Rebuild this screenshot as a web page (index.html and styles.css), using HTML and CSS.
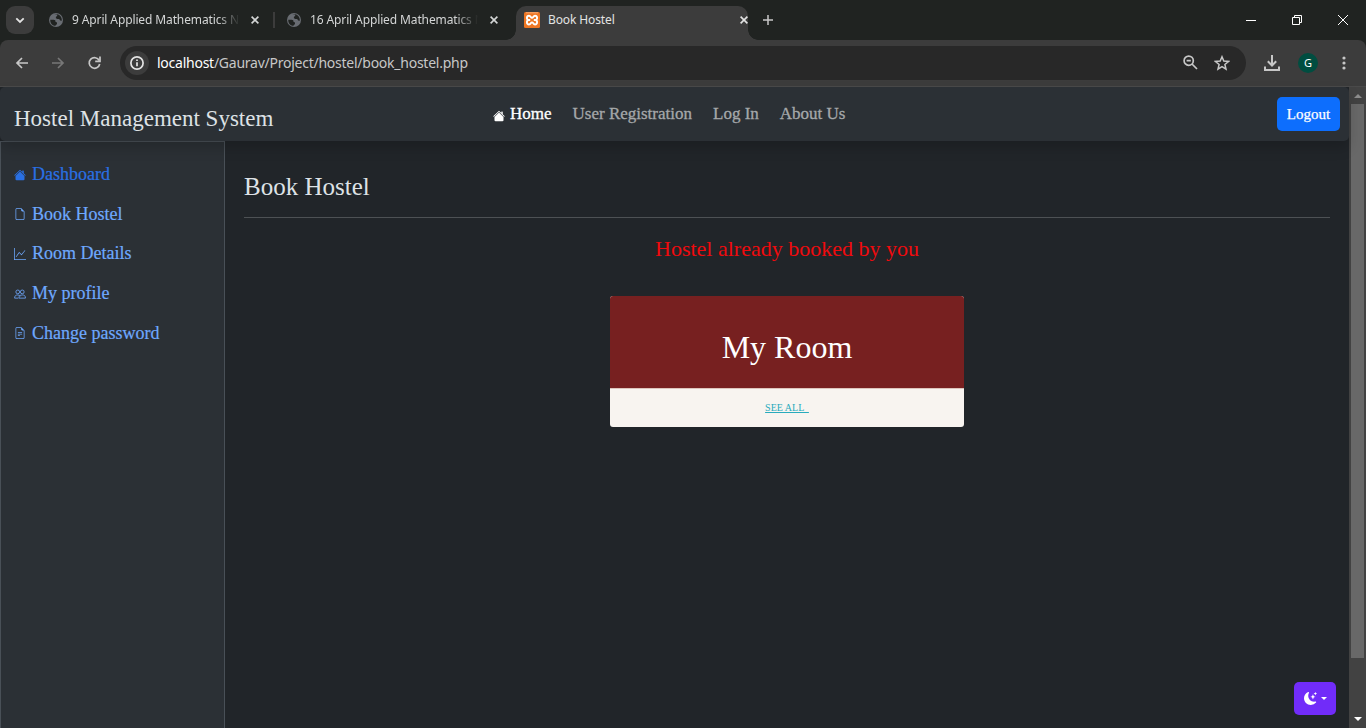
FILE: index.html
```html
<!DOCTYPE html>
<html lang="en">
<head>
<meta charset="utf-8">
<title>Book Hostel</title>
<link rel="stylesheet" href="styles.css">
</head>
<body>
<svg class="defs" width="0" height="0">
  <symbol id="house" viewBox="0 0 16 16"><path d="m8 3.293 6 6V13.5a1.5 1.5 0 0 1-1.5 1.5h-9A1.5 1.5 0 0 1 2 13.5V9.293l6-6zm5-.793V6l-2-2V2.5a.5.5 0 0 1 .5-.5h1a.5.5 0 0 1 .5.5z"/><path d="M7.293 1.5a1 1 0 0 1 1.414 0l6.647 6.646a.5.5 0 0 1-.708.708L8 2.207 1.354 8.854a.5.5 0 1 1-.708-.708L7.293 1.5z"/></symbol>
  <symbol id="file" viewBox="0 0 16 16"><path d="M14 4.5V14a2 2 0 0 1-2 2H4a2 2 0 0 1-2-2V2a2 2 0 0 1 2-2h5.5L14 4.5zm-3 0A1.5 1.5 0 0 1 9.500 3V1H4a1 1 0 0 0-1 1v12a1 1 0 0 0 1 1h8a1 1 0 0 0 1-1V4.500h-2z"/></symbol>
  <symbol id="graph" viewBox="0 0 16 16"><path fill-rule="evenodd" d="M0 0h1v15h15v1H0V0Zm14.817 3.113a.5.5 0 0 1 .07.704l-4.500 5.500a.5.5 0 0 1-.74.037L7.060 6.767l-3.656 5.027a.5.5 0 0 1-.808-.588l4-5.500a.5.5 0 0 1 .758-.06l2.609 2.610 4.150-5.073a.5.5 0 0 1 .704-.07Z"/></symbol>
  <symbol id="people" viewBox="0 0 16 16"><g fill="none" stroke="currentColor" stroke-width="1.100"><circle cx="5" cy="5.200" r="2.500"/><circle cx="11" cy="5.200" r="2.500"/><path d="M.8 13.500c0-3 1.500-4.200 4.200-4.200 1.800 0 3 .6 3.600 1.800M.8 13.500h5M6.600 13.500c0-3 1.500-4.200 4.400-4.200s4.300 1.200 4.300 4.200z"/></g></symbol>
  <symbol id="filetext" viewBox="0 0 16 16"><path d="M5.500 7a.5.5 0 0 0 0 1h5a.5.5 0 0 0 0-1h-5zM5 9.500a.5.5 0 0 1 .5-.5h5a.5.5 0 0 1 0 1h-5a.5.5 0 0 1-.5-.5zm0 2a.5.5 0 0 1 .5-.5h2a.5.5 0 0 1 0 1h-2a.5.5 0 0 1-.5-.5z"/><path d="M9.500 0H4a2 2 0 0 0-2 2v12a2 2 0 0 0 2 2h8a2 2 0 0 0 2-2V4.500L9.500 0zm0 1v2A1.500 1.500 0 0 0 11 4.500h2V14a1 1 0 0 1-1 1H4a1 1 0 0 1-1-1V2a1 1 0 0 1 1-1h5.500z"/></symbol>
  <symbol id="globe" viewBox="0 0 14 14"><circle cx="7" cy="7" r="7" fill="#686c72"/><path d="M1.300 6.700h3.200c1.600 0 2.300.9 1.900 2.100l1.600.7v1.400L6.300 12.800C3.200 12.500 1 9.900 1.300 6.700ZM5.300 1.700h2.900v1.100L6.900 4.100v1.200l1.500.8 1.800-.1.900 1.500 1.700.3c.4-3.200-1.700-6-4.600-6.500" fill="#202321"/></symbol>
  <symbol id="x" viewBox="0 0 8 8"><path d="m.6.6 6.800 6.800M7.400.6.6 7.400" fill="none" stroke="currentColor" stroke-width="1.600"/></symbol>
</svg>

<div class="tabstrip">
  <div class="tab-search"><svg width="10" height="7" viewBox="0 0 10 7"><path d="m1.300 1.300 3.700 3.700 3.700-3.700" fill="none" stroke="#e3e3e3" stroke-width="1.800"/></svg></div>
  <div class="tab first"><svg class="favicon"><use href="#globe"/></svg><span class="title fade">9 April Applied Mathematics Notes</span><svg class="close"><use href="#x"/></svg></div>
  <div class="tab second"><svg class="favicon"><use href="#globe"/></svg><span class="title fade">16 April Applied Mathematics Notes</span><svg class="close"><use href="#x"/></svg></div>
  <div class="tab active">
    <svg class="xampp" viewBox="0 0 16 16"><rect width="16" height="16" rx="1.500" fill="#ee7623"/><path d="M2 .8h12" stroke="#ffc39a" stroke-width=".7"/><path d="M6.200 8H5.100C1.900 8 2.500 3.800 5 3.800c1.900 0 1.600 2 3 2s1.100-2 3-2c2.500 0 3.100 4.200-.1 4.200H9.800h1.100c3.200 0 2.600 4.500.1 4.500-1.900 0-1.600-2.100-3-2.100s-1.100 2.100-3 2.100C2.500 12.500 1.900 8 5.100 8" fill="none" stroke="#fff" stroke-width="1.900"/></svg>
    <span class="title">Book Hostel</span><svg class="close"><use href="#x"/></svg>
  </div>
  <svg class="plus" width="12" height="12" viewBox="0 0 12 12"><path d="M6 1v10M1 6h10" stroke="#c7c7c7" stroke-width="1.500"/></svg>
  <div class="window-controls">
    <svg width="10" height="10" viewBox="0 0 10 10"><path d="M0 5.500h10"/></svg>
    <svg width="10" height="10" viewBox="0 0 10 10"><path d="M.5 2.500h7v7h-7zM2.500 2.500v-2h7v7h-2"/></svg>
    <svg width="10" height="10" viewBox="0 0 10 10"><path d="m0 0 10 10M10 0 0 10"/></svg>
  </div>
</div>

<div class="toolbar">
  <svg class="nav" viewBox="0 0 12 12"><path d="M12 6H1M6 1 1 6l5 5"/></svg>
  <svg class="nav dim" viewBox="0 0 12 12"><path d="M0 6h11M6 1l5 5-5 5"/></svg>
  <svg class="nav reload" viewBox="0 0 13 13"><path d="M11.200 4.500A5.300 5.300 0 1 0 11.700 8"/><path d="M12 .6V5.400H7.200"/></svg>
  <div class="omnibox">
    <div class="site-info"><svg width="14" height="14" viewBox="0 0 14 14"><circle cx="7" cy="7" r="6.100"/><path d="M7 6.200v4M7 3.500v1.500"/></svg></div>
    <span class="url"><b>localhost</b>/Gaurav/Project/hostel/book_hostel.php</span>
    <svg class="magnifier" width="15" height="15" viewBox="0 0 15 15"><circle cx="5.700" cy="5.700" r="4.600"/><path d="m9 9 5 5M3.600 5.700h4.200"/></svg>
    <svg class="star" width="16" height="16" viewBox="0 0 16 16"><path d="m8 1.800 1.800 4.300 4.700.4-3.600 3 1.100 4.600-4-2.500-4 2.500 1.100-4.600-3.600-3 4.700-.4z"/></svg>
  </div>
  <svg class="download" width="16" height="16" viewBox="0 0 16 16"><path d="M8 0v10.500M3.800 6.300 8 10.500l4.200-4.200M1 11.500V15h14v-3.500"/></svg>
  <div class="avatar">G</div>
  <svg class="menu" width="4" height="14" viewBox="0 0 4 14"><circle cx="2" cy="2" r="1.600"/><circle cx="2" cy="7" r="1.600"/><circle cx="2" cy="12" r="1.600"/></svg>
</div>

<div class="viewport">
  <div class="page">
    <header class="navbar">
      <div class="brand">Hostel Management System</div>
      <nav class="links">
        <a class="current"><svg><use href="#house"/></svg><span>Home</span></a>
        <a><span>User Registration</span></a><a><span>Log In</span></a><a><span>About Us</span></a>
      </nav>
      <button class="logout">Logout</button>
    </header>
    <div class="body">
      <aside class="sidebar">
        <a class="selected"><svg><use href="#house"/></svg><span>Dashboard</span></a>
        <a><svg><use href="#file"/></svg><span>Book Hostel</span></a>
        <a><svg><use href="#graph"/></svg><span>Room Details</span></a>
        <a><svg><use href="#people"/></svg><span>My profile</span></a>
        <a><svg><use href="#filetext"/></svg><span>Change password</span></a>
      </aside>
      <main class="content">
        <h1>Book Hostel</h1>
        <p class="notice">Hostel already booked by you</p>
        <section class="card">
          <div class="card-body">My Room</div>
          <div class="card-footer"><a>SEE ALL &nbsp;</a></div>
        </section>
      </main>
    </div>
    <button class="theme"><svg width="13" height="13" viewBox="0 0 16 16"><path d="M6 .278a.768.768 0 0 1 .08.858 7.208 7.208 0 0 0-.878 3.460c0 4.021 3.278 7.277 7.318 7.277.527 0 1.040-.055 1.533-.16a.787.787 0 0 1 .81.316.733.733 0 0 1-.031.893A8.349 8.349 0 0 1 8.344 16C3.734 16 0 12.286 0 7.710 0 4.266 2.114 1.312 5.124.06A.752.752 0 0 1 6 .278z"/><path d="M10.794 3.148a.217.217 0 0 1 .412 0l.387 1.162c.173.518.579.924 1.097 1.097l1.162.387a.217.217 0 0 1 0 .412l-1.162.387a1.734 1.734 0 0 0-1.097 1.097l-.387 1.162a.217.217 0 0 1-.412 0l-.387-1.162A1.734 1.734 0 0 0 9.310 6.593l-1.162-.387a.217.217 0 0 1 0-.412l1.162-.387a1.734 1.734 0 0 0 1.097-1.097l.387-1.162zM13.863.099a.145.145 0 0 1 .274 0l.258.774c.115.346.386.617.732.732l.774.258a.145.145 0 0 1 0 .274l-.774.258a1.156 1.156 0 0 0-.732.732l-.258.774a.145.145 0 0 1-.274 0l-.258-.774a1.156 1.156 0 0 0-.732-.732l-.774-.258a.145.145 0 0 1 0-.274l.774-.258c.346-.115.617-.386.732-.732L13.863.1z"/></svg><i></i></button>
  </div>
  <div class="scrollbar"><i class="up"></i><div class="thumb"></div><i class="down"></i></div>
</div>
</body>
</html>
```

FILE: styles.css
```css
* { box-sizing: border-box; }
body { margin: 0; width: 1366px; height: 728px; overflow: hidden; background: #202321; font-family: "Liberation Serif", serif; }
svg { display: block; flex: none; fill: currentColor; }
.defs { position: absolute; }

/* Browser window */
.tabstrip { height: 40px; display: flex; align-items: center; padding-left: 6px; background: #202321; font-family: "Noto Sans", sans-serif; color: #d4d6d6; }
.tab-search { width: 28px; height: 28px; border-radius: 9px; background: #3c3c3c; display: grid; place-items: center; }
.tab { display: flex; align-items: center; height: 34px; flex: none; }
.first { width: 241px; padding-left: 15px; border-right: 0; }
.second { width: 241px; padding-left: 12px; }
.first::after { content: ""; width: 2px; height: 16px; background: #3c3c3c; margin-left: 14px; }
.favicon { width: 14px; height: 14px; }
.title { width: 168px; margin-left: 9px; margin-right: 12px; font-size: 12px; line-height: 18px; white-space: nowrap; overflow: hidden; letter-spacing: -0.12px; }
.fade { mask-image: linear-gradient(90deg, #000 145px, transparent 168px); }
.close { width: 8px; height: 8px; }
.active { position: relative; width: 232px; height: 34px; margin-top: 6px; padding: 0 0 6px 8px; border-radius: 10px 10px 0 0; background: #3c3c3c; color: #e3e3e3; }
.active .title { width: 180px; margin-left: 8px; }
.active::before, .active::after { content: ""; position: absolute; bottom: 0; width: 10px; height: 10px; }
.active::before { left: -10px; background: radial-gradient(circle at 0 0, transparent 9.5px, #3c3c3c 10px); }
.active::after { right: -10px; background: radial-gradient(circle at 100% 0, transparent 9.5px, #3c3c3c 10px); }
.xampp { width: 16px; height: 16px; }
.plus { margin-left: 14px; }
.window-controls { display: flex; gap: 36px; margin-left: auto; padding-right: 18px; }
.window-controls path { fill: none; stroke: #fff; stroke-width: 1; }
.toolbar { height: 47px; display: flex; align-items: center; padding: 0 20px 1px 16px; background: #3c3c3c; border-bottom: 1px solid #4a4a4a; border-radius: 8px 8px 0 0; color: #c7c7c7; font-family: "Noto Sans", sans-serif; }
.nav { width: 12px; height: 12px; margin-right: 24px; overflow: visible; }
.nav path, .site-info svg, .omnibox > svg, .download { fill: none; stroke: currentColor; stroke-width: 1.7; }
.dim { color: #777; }
.reload { width: 13px; height: 13px; margin-right: 19px; }
.omnibox { width: 1126px; height: 34px; border-radius: 17px; background: #282828; display: flex; align-items: center; padding: 0 16px 0 5px; }
.site-info { width: 24px; height: 24px; border-radius: 50%; background: #3c3c3c; display: grid; place-items: center; color: #e3e3e3; }
.url { margin-left: 8px; font-size: 14px; letter-spacing: -0.25px; color: #c7c7c7; }
.url b { font-weight: 400; color: #fff; }
.magnifier { margin-left: auto; margin-right: 16px; }
.omnibox > .star { stroke-width: 1.5; }
.download { margin-left: 18px; stroke-width: 2; }
.avatar { width: 20px; height: 20px; margin-left: 18px; border-radius: 50%; background: #004d40; color: #fff; font-size: 11px; display: grid; place-items: center; }
.menu { margin-left: 24px; }

/* Site */
.viewport { display: flex; height: 641px; }
.page { position: relative; width: 1349px; display: flex; flex-direction: column; background: #212529; }
.navbar { position: relative; height: 54px; display: grid; grid-template-columns: 492px 1fr auto; align-items: start; padding: 0 9px 0 1px; background: #2b3035; border-radius: 5px; box-shadow: 0 7px 13px rgba(0, 0, 0, .17); z-index: 1; }
.brand { padding: 18px 0 0 13px; font-size: 23px; line-height: 28px; color: #dee2e6; white-space: nowrap; }
.links { display: flex; gap: 21px; padding-top: 17px; color: #a5a8aa; font-size: 17px; line-height: 20px; white-space: nowrap; -webkit-text-stroke: .3px currentColor; }
.links a { display: flex; align-items: center; }
.links svg { width: 12px; height: 12px; margin: 3px 5px 0 0; stroke: none; }
.links .current { color: #fff; }
.logout { width: 63px; height: 34px; margin-top: 10px; padding: 0; border: 0; border-radius: 5px; background: #0d6efd; color: #fff; font: 15px/20px "Liberation Serif", serif; -webkit-text-stroke: .25px #fff; }
.body { flex: 1; display: flex; }
.sidebar { width: 225px; display: flex; flex-direction: column; gap: 19.7px; padding: 22px 0 0 13px; border: 1px solid #495057; border-bottom: 0; background: #2b3035; color: #6ea8fe; }
.sidebar a { display: flex; align-items: center; gap: 6px; height: 20px; font-size: 18px; line-height: 20px; white-space: nowrap; -webkit-text-stroke: .2px currentColor; }
.sidebar svg { width: 12px; height: 12px; margin-top: 1px; }
.sidebar .selected { color: #2970e5; }
.content { flex: 1; padding: 30px 19px 0; display: flex; flex-direction: column; color: #dee2e6; }
.content h1 { margin: 0; height: 47px; border-bottom: 1px solid #4d5154; font-size: 25px; font-weight: 400; line-height: 32px; }
.notice { margin: 17px 0 0; text-align: center; color: #f00a0d; font-size: 22px; line-height: 28px; }
.card { width: 354px; height: 131px; margin: 33px auto 0; border-radius: 3px; overflow: hidden; background: #f8f4f0; text-align: center; }
.card-body { height: 92px; padding-top: 32px; background: #772020; color: #fff; font-size: 32px; line-height: 38px; }
.card-footer { height: 39px; border-top: 1px solid #dfc5bd; padding-top: 13px; font-size: 10px; line-height: 12px; color: #29abbd; }
.card-footer a { text-decoration: underline; }
.theme { position: absolute; right: 13px; bottom: 13px; width: 42px; height: 33px; padding: 0 9px 0 10px; display: flex; align-items: center; gap: 4px; border: 0; border-radius: 5px; background: #712cf9; color: #fff; }
.theme i { border: 3px solid transparent; border-top-color: #fff; border-bottom: 0; }
.scrollbar { width: 17px; display: flex; flex-direction: column; align-items: center; background: #424242; }
.up { margin: 7px 0 6px; border: 4px solid transparent; border-top: 0; border-bottom-color: #8d8d8d; }
.thumb { width: 13px; height: 554px; background: #686868; }
.down { margin-top: auto; margin-bottom: 7px; border: 4px solid transparent; border-top-color: #fff; border-bottom: 0; }
```
